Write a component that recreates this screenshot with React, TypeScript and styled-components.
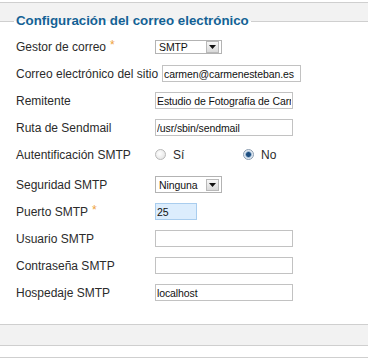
import styled, { createGlobalStyle } from 'styled-components'

const GlobalStyle = createGlobalStyle`
  html, body {
    margin: 0;
    padding: 0;
    background: #fff;
  }
  body {
    font-family: "Liberation Sans", Arial, sans-serif;
    color: #333;
  }
`

type Field = {
  label: string,
  required?: boolean,
  kind: 'text' | 'select' | 'radio',
  value?: string,
  width?: number,
  options?: string[],
  highlight?: boolean,
  extra?: number
}

const fields: Field[] = [
  { label: 'Gestor de correo', required: true, kind: 'select', value: 'SMTP', options: ['PHP Mail', 'Sendmail', 'SMTP'] },
  { label: 'Correo electrónico del sitio', kind: 'text', value: 'carmen@carmenesteban.es', width: 139 },
  { label: 'Remitente', kind: 'text', value: 'Estudio de Fotografía de Carmen Esteban', width: 138 },
  { label: 'Ruta de Sendmail', kind: 'text', value: '/usr/sbin/sendmail', width: 138 },
  { label: 'Autentificación SMTP', kind: 'radio', value: 'No', options: ['Sí', 'No'], extra: 3 },
  { label: 'Seguridad SMTP', kind: 'select', value: 'Ninguna', options: ['Ninguna', 'SSL', 'TLS'] },
  { label: 'Puerto SMTP', required: true, kind: 'text', value: '25', width: 42, highlight: true },
  { label: 'Usuario SMTP', kind: 'text', value: '', width: 138 },
  { label: 'Contraseña SMTP', kind: 'text', value: '', width: 138 },
  { label: 'Hospedaje SMTP', kind: 'text', value: 'localhost', width: 138 },
]

function SelectField ({ value, options, tall }: { value: string, options: string[], tall?: boolean }) {
  return (
    <SelectFrame $tall={tall || false}>
      <NativeSelect defaultValue={value}>
        {options.map(o => <option key={o}>{o}</option>)}
      </NativeSelect>
      <DropButton>
        <svg width="7" height="4" viewBox="0 0 7 4"><path d="M0 0h7L3.5 4z" fill="#111" /></svg>
      </DropButton>
    </SelectFrame>
  )
}

export default function App () {
  return (
    <>
      <GlobalStyle />
      <Page>
        <TopBand />
        <Fieldset>
          <Legend>Configuración del correo electrónico</Legend>
          {fields.map(f => (
            <Row key={f.label} $extra={f.extra || 0}>
              <Label>
                {f.label}
                {f.required && <Star>*</Star>}
              </Label>
              {f.kind === 'text' && (
                <TextInput
                  type="text"
                  defaultValue={f.value}
                  $width={f.width || 138}
                  $highlight={f.highlight || false}
                />
              )}
              {f.kind === 'select' && (
                <SelectField value={f.value || ''} options={f.options || []} tall={f.value === 'Ninguna'} />
              )}
              {f.kind === 'radio' && (
                <RadioGroup>
                  {(f.options || []).map(o => (
                    <RadioOption key={o}>
                      <Radio type="radio" name="smtpauth" defaultChecked={o === f.value} />
                      {o}
                    </RadioOption>
                  ))}
                </RadioGroup>
              )}
            </Row>
          ))}
        </Fieldset>
        <BottomBand />
        <Divider />
      </Page>
    </>
  )
}

const Page = styled.div`
  width: 368px;
  height: 361px;
  overflow: hidden;
`

const TopBand = styled.div`
  margin-top: 2px;
  height: 18px;
  border-top: 1px solid #cfcfcf;
  background: #f2f2f2;
`

const Fieldset = styled.fieldset`
  margin: -8px 0 0;
  padding: 4px 0 18px 16px;
  border: none;
  border-top: 1px solid #cfcfcf;
  min-width: 0;
`

const Legend = styled.legend`
  margin-left: -2px;
  padding: 0 2px;
  font-size: 13.3px;
  line-height: 16px;
  font-weight: bold;
  color: #146295;
`

const Row = styled.div<{ $extra: number }>`
  display: flex;
  align-items: center;
  height: 27px;
  margin-bottom: ${props => props.$extra}px;
`

const Label = styled.label`
  min-width: 135px;
  margin-right: 4px;
  font-size: 12px;
  color: #2b2b2b;
  white-space: nowrap;
`

const Star = styled.span`
  margin-left: 4px;
  color: #eea23c;
  font-size: 12px;
  position: relative;
  top: -2px;
`

const TextInput = styled.input<{ $width: number, $highlight: boolean }>`
  box-sizing: border-box;
  width: ${props => props.$width}px;
  height: 17px;
  margin: 0;
  padding: 0 1px;
  border: 1px solid ${props => props.$highlight ? '#a9cdee' : '#c2c2c2'};
  background: ${props => props.$highlight ? '#dcedfd' : '#fff'};
  font-family: "Liberation Sans", Arial, sans-serif;
  font-size: 10.5px;
  letter-spacing: -0.1px;
  color: #111;
  outline: none;
`

const SelectFrame = styled.span<{ $tall: boolean }>`
  box-sizing: border-box;
  display: inline-flex;
  align-items: center;
  width: 67px;
  height: ${props => props.$tall ? 17 : 14}px;
  border: 1px solid #b3b3b3;
  background: #fff;
`

const NativeSelect = styled.select`
  appearance: none;
  flex: 1;
  min-width: 0;
  height: 100%;
  margin: 0;
  padding: 0 0 0 3px;
  border: none;
  background: transparent;
  font-family: "Liberation Sans", Arial, sans-serif;
  font-size: 10.5px;
  letter-spacing: -0.1px;
  color: #111;
  outline: none;
`

const DropButton = styled.span`
  box-sizing: border-box;
  display: flex;
  align-items: center;
  justify-content: center;
  width: 13px;
  height: 12px;
  margin-right: 2px;
  border: 1px solid #b9b9b9;
  background: linear-gradient(#f7f7f7, #d9d9d9);
`

const RadioGroup = styled.div`
  display: flex;
  align-items: center;
`

const RadioOption = styled.label`
  display: flex;
  align-items: center;
  gap: 7px;
  min-width: 88px;
  font-size: 12px;
  color: #2b2b2b;
`

const Radio = styled.input`
  appearance: none;
  box-sizing: border-box;
  width: 11px;
  height: 11px;
  margin: 0;
  border: 1px solid #b8b8b8;
  border-radius: 50%;
  background: radial-gradient(circle at 40% 40%, #ffffff, #dedede);

  &:checked {
    border-color: #8a9cb0;
    background: radial-gradient(circle, #1d4d7e 0 2px, #5f8ab5 2.5px, #d9e4ef 3.5px, #eef2f6 5px);
  }
`

const BottomBand = styled.div`
  height: 20px;
  border-top: 1px solid #cfcfcf;
  border-bottom: 1px solid #cfcfcf;
  background: #f2f2f2;
`

const Divider = styled.div`
  margin-top: 11px;
  border-top: 1px solid #cfcfcf;
`
